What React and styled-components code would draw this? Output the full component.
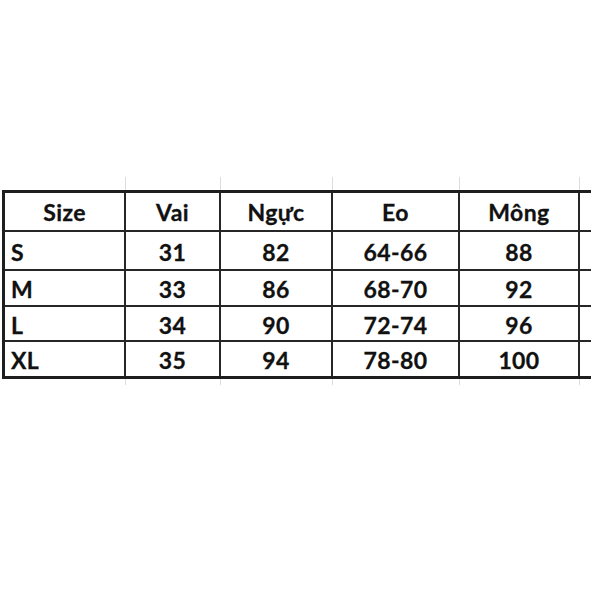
import React from 'react';
import styled, { createGlobalStyle } from 'styled-components';

const GlobalStyle = createGlobalStyle`
  html, body {
    margin: 0;
    padding: 0;
    background: #ffffff;
  }
`;

const Page = styled.div`
  width: 591px;
  height: 591px;
  overflow: hidden;
  background: #ffffff;
  padding-top: 177px;
  box-sizing: border-box;
  font-family: Lato, "Open Sans", sans-serif;
`;

const columns = '121px 95px 112px 127px 120px 120px';

// faint spreadsheet gridlines peeking out above / below the table
const GridStrip = styled.div`
  display: grid;
  grid-template-columns: ${columns};
  margin-left: 5px;
  height: ${(p) => p.$h}px;
`;

const GridTick = styled.div`
  border-right: 1px solid #dcdcdc;
`;

const Table = styled.div`
  display: flex;
  flex-direction: column;
  width: 700px;
  margin-left: 2px;
  border-top: 3px solid #1e1e1e;
  border-bottom: 3px solid #1e1e1e;
  border-left: 3px solid #1e1e1e;
`;

const Row = styled.div`
  display: grid;
  grid-template-columns: ${columns};
  height: ${(p) => p.$h}px;
  border-bottom: ${(p) => (p.$last ? 'none' : '2px solid #262626')};
  box-sizing: border-box;
`;

const Cell = styled.div`
  display: flex;
  align-items: center;
  justify-content: ${(p) => (p.$left ? 'flex-start' : 'center')};
  padding-left: ${(p) => (p.$left ? '6px' : '0')};
  padding-top: ${(p) => (p.$head ? '0' : '2px')};
  border-right: 2px solid #262626;
  font-size: 23px;
  font-weight: 700;
  color: #111111;
  letter-spacing: 0.4px;
  -webkit-text-stroke: 0.3px #111111;
`;

const header = ['Size', 'Vai', 'Ngực', 'Eo', 'Mông', ''];

const rows = [
  { h: 39, cells: ['S', '31', '82', '64-66', '88', ''] },
  { h: 36, cells: ['M', '33', '86', '68-70', '92', ''] },
  { h: 35, cells: ['L', '34', '90', '72-74', '96', ''] },
  { h: 34, cells: ['XL', '35', '94', '78-80', '100', ''], last: true },
];

export default function App() {
  return (
    <Page>
      <GlobalStyle />
      <GridStrip $h={13}>
        {header.map((_, i) => (
          <GridTick key={i} />
        ))}
      </GridStrip>
      <Table>
        <Row $h={39}>
          {header.map((t, i) => (
            <Cell key={i} $head>
              {t}
            </Cell>
          ))}
        </Row>
        {rows.map((r, ri) => (
          <Row key={ri} $h={r.h} $last={r.last}>
            {r.cells.map((t, i) => (
              <Cell key={i} $left={i === 0}>
                {t}
              </Cell>
            ))}
          </Row>
        ))}
      </Table>
      <GridStrip $h={6}>
        {header.map((_, i) => (
          <GridTick key={i} />
        ))}
      </GridStrip>
    </Page>
  );
}
